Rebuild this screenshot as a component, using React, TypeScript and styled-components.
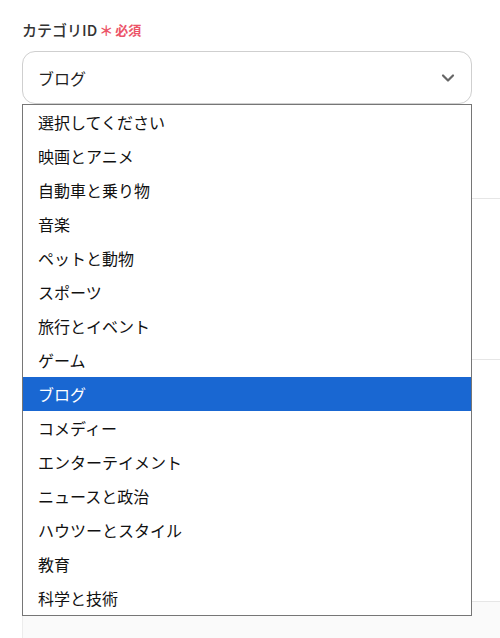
import React from 'react';
import styled, { createGlobalStyle } from 'styled-components';

const GlobalStyle = createGlobalStyle`
  html, body {
    margin: 0;
    padding: 0;
    background: #fff;
    font-family: "Noto Sans CJK JP", "Noto Sans", sans-serif;
    color: #333;
  }
`;

const categories = [
  '選択してください',
  '映画とアニメ',
  '自動車と乗り物',
  '音楽',
  'ペットと動物',
  'スポーツ',
  '旅行とイベント',
  'ゲーム',
  'ブログ',
  'コメディー',
  'エンターテイメント',
  'ニュースと政治',
  'ハウツーとスタイル',
  '教育',
  '科学と技術',
];

const Page = styled.div`
  width: 500px;
  height: 638px;
  overflow: hidden;
  box-sizing: border-box;
  padding: 18px 0 0 22px;
`;

const Field = styled.div`
  position: relative;
  width: 450px;
`;

const Label = styled.div`
  display: flex;
  align-items: center;
  height: 22px;
  font-size: 15px;
  font-weight: 500;
  color: #333;
  margin-bottom: 11px;
`;

const Asterisk = styled.span`
  color: #ec5468;
  font-size: 14px;
  font-weight: 700;
  margin: 2px 2px 0 2px;
`;

const Required = styled.span`
  color: #ec5468;
  font-size: 13px;
  font-weight: 700;
`;

const SelectBox = styled.div`
  box-sizing: border-box;
  height: 53px;
  border: 1px solid #cfcfcf;
  border-radius: 13px;
  display: flex;
  align-items: center;
  justify-content: space-between;
  padding: 0 16px 0 15px;
  font-size: 16px;
  color: #222;
`;

const Listbox = styled.ul`
  position: absolute;
  top: 86px;
  left: 0;
  z-index: 10;
  box-sizing: border-box;
  width: 450px;
  margin: 0;
  padding: 0;
  list-style: none;
  background: #fff;
  border: 1px solid #767676;
`;

const Option = styled.li<{ $selected?: boolean }>`
  height: 34px;
  display: flex;
  align-items: center;
  padding-left: 15px;
  font-size: 16px;
  color: ${p => (p.$selected ? '#fff' : '#111')};
  background: ${p => (p.$selected ? '#1967d2' : 'transparent')};
`;

const Section = styled.div<{ $height: number }>`
  height: ${p => p.$height}px;
  border-bottom: 1px solid #e6e6e6;
  margin-right: -22px;
  box-sizing: border-box;
`;

const HiddenInput = styled.div`
  box-sizing: border-box;
  width: 450px;
  height: 50px;
  margin-top: 95px;
  border: 1px solid #cfcfcf;
  border-radius: 9px;
`;

const Footer = styled.div`
  margin-top: 96px;
  height: 60px;
  background: #fafafa;
  border-top: 1px solid #e6e6e6;
  border-left: 1px solid #ececec;
  margin-right: -22px;
`;

const Chevron = () => (
  <svg width="14" height="10" viewBox="0 0 14 10" fill="none">
    <path d="M2 2.5 L7 7.5 L12 2.5" stroke="#666" strokeWidth="2.2" strokeLinecap="round" strokeLinejoin="round" />
  </svg>
);

export default function App() {
  return (
    <>
      <GlobalStyle />
      <Page>
        <Field>
          <Label>
            カテゴリID
            <Asterisk>＊</Asterisk>
            <Required>必須</Required>
          </Label>
          <SelectBox>
            <span>ブログ</span>
            <Chevron />
          </SelectBox>
          <Listbox>
            {categories.map(c => (
              <Option key={c} $selected={c === 'ブログ'}>
                {c}
              </Option>
            ))}
          </Listbox>
        </Field>
        <Section $height={95} />
        <Section $height={161} />
        <HiddenInput />
        <Footer />
      </Page>
    </>
  );
}
